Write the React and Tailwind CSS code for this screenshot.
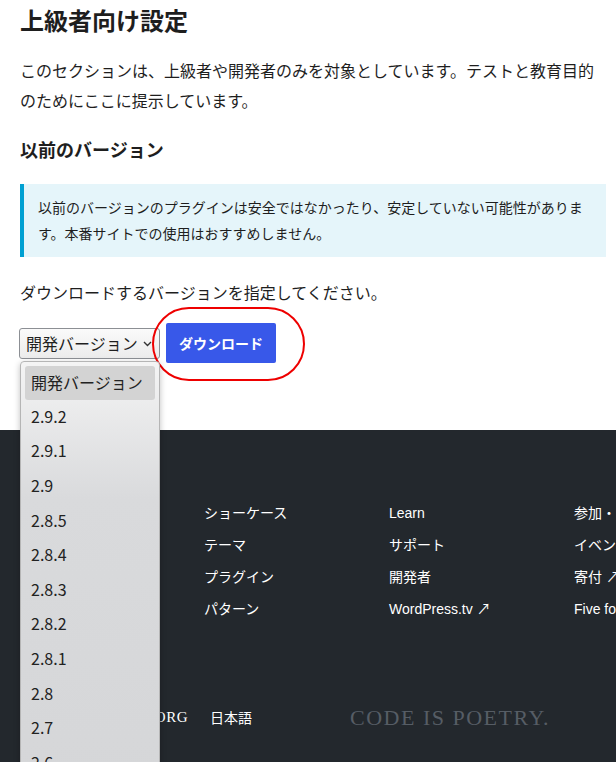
import React from "react";

const versions = ["2.9.2", "2.9.1", "2.9", "2.8.5", "2.8.4", "2.8.3", "2.8.2", "2.8.1", "2.8", "2.7", "2.6", "2.5"];

const cols = [
  ["ショーケース", "テーマ", "プラグイン", "パターン"],
  ["Learn", "サポート", "開発者", "WordPress.tv ↗"],
  ["参加・貢献", "イベント", "寄付 ↗", "Five for the Future"],
];

export default function App() {
  return (
    <div className="relative w-[616px] h-[762px] overflow-hidden bg-white text-[#1e1e1e] font-['Noto_Sans_CJK_JP','Liberation_Sans',sans-serif]">
      <main className="pl-[20px] pr-[10px]">
        <h1 className="mt-[5px] text-[24px] leading-[30px] font-bold">上級者向け設定</h1>
        <p className="mt-[20px] text-[16px] leading-[30px]">
          このセクションは、上級者や開発者のみを対象としています。テストと教育目的のためにここに提示しています。
        </p>
        <h2 className="mt-[21px] text-[18px] leading-[26px] font-bold">以前のバージョン</h2>
        <div className="mt-[22px] border-l-[4px] border-[#00a0d2] bg-[#e5f5fa] pl-[14px] pr-[12px] pt-[10px] pb-[11px] text-[14px] leading-[26px]">
          以前のバージョンのプラグインは安全ではなかったり、安定していない可能性があります。本番サイトでの使用はおすすめしません。
        </div>
        <p className="mt-[20px] text-[16px] leading-[30px]">ダウンロードするバージョンを指定してください。</p>
        <div className="relative mt-[16px] flex items-center gap-[6px]">
          <div className="relative ml-[-1px] flex h-[31px] w-[141px] items-center rounded-[3px] border border-[#8c8f94] bg-gradient-to-b from-[#fafafa] to-[#ececec] pl-[6px] pb-[1px] text-[16px] leading-none">
            <span>開発バージョン</span>
            <svg className="absolute right-[7px] top-[12px]" width="9" height="6" viewBox="0 0 9 6" fill="none">
              <path d="M1 1l3.5 3.5L8 1" stroke="#333" strokeWidth="1.4" />
            </svg>
          </div>
          <button className="h-[40px] w-[110px] rounded-[2px] bg-[#3858e9] text-[14px] font-bold text-white">
            ダウンロード
          </button>
          <div className="pointer-events-none absolute left-[132px] top-[-16px] h-[74px] w-[153px] rounded-[37px] border-[2.5px] border-[#ee0000]"></div>
        </div>
      </main>

      <footer className="mt-[67px] h-[400px] bg-[#23282d] pt-[67px] pl-[20px] text-white">
        <div className="flex text-[14px] leading-[32px] font-['Liberation_Sans','Noto_Sans_CJK_JP',sans-serif]">
          <div className="w-[184px] shrink-0"></div>
          {cols.map((c, i) => (
            <div key={i} className="w-[185px] shrink-0 whitespace-nowrap">
              {c.map((t) => (
                <div key={t}>{t}</div>
              ))}
            </div>
          ))}
        </div>
        <div className="mt-[77px] flex h-[30px] items-center">
          <div className="w-[168px] shrink-0 whitespace-nowrap text-right font-['Liberation_Serif',serif] text-[15px] tracking-[0.5px] text-white">
            ORG
          </div>
          <div className="ml-[22px] w-[140px] shrink-0 text-[14px]">日本語</div>
          <div className="whitespace-nowrap font-['Liberation_Serif',serif] text-[22px] tracking-[1.5px] text-[#565d65]">
            CODE IS POETRY.
          </div>
        </div>
      </footer>

      <div className="absolute left-[20px] top-[361px] w-[140px] rounded-[4px] border border-[#b5b5b5] bg-gradient-to-b from-[#f4f4f4] via-[#d9dadc] via-30% to-[#d5d6d8] p-[4px] shadow-[0_2px_6px_rgba(0,0,0,0.25)] text-[16px] text-[#222]">
        <div className="flex h-[34px] items-center rounded-[3px] bg-[#d3d3d3] pb-[3px] pl-[6px]">開発バージョン</div>
        {versions.map((v) => (
          <div key={v} className="flex h-[34.6px] items-center pb-[3px] pl-[6px]">{v}</div>
        ))}
      </div>
    </div>
  );
}
